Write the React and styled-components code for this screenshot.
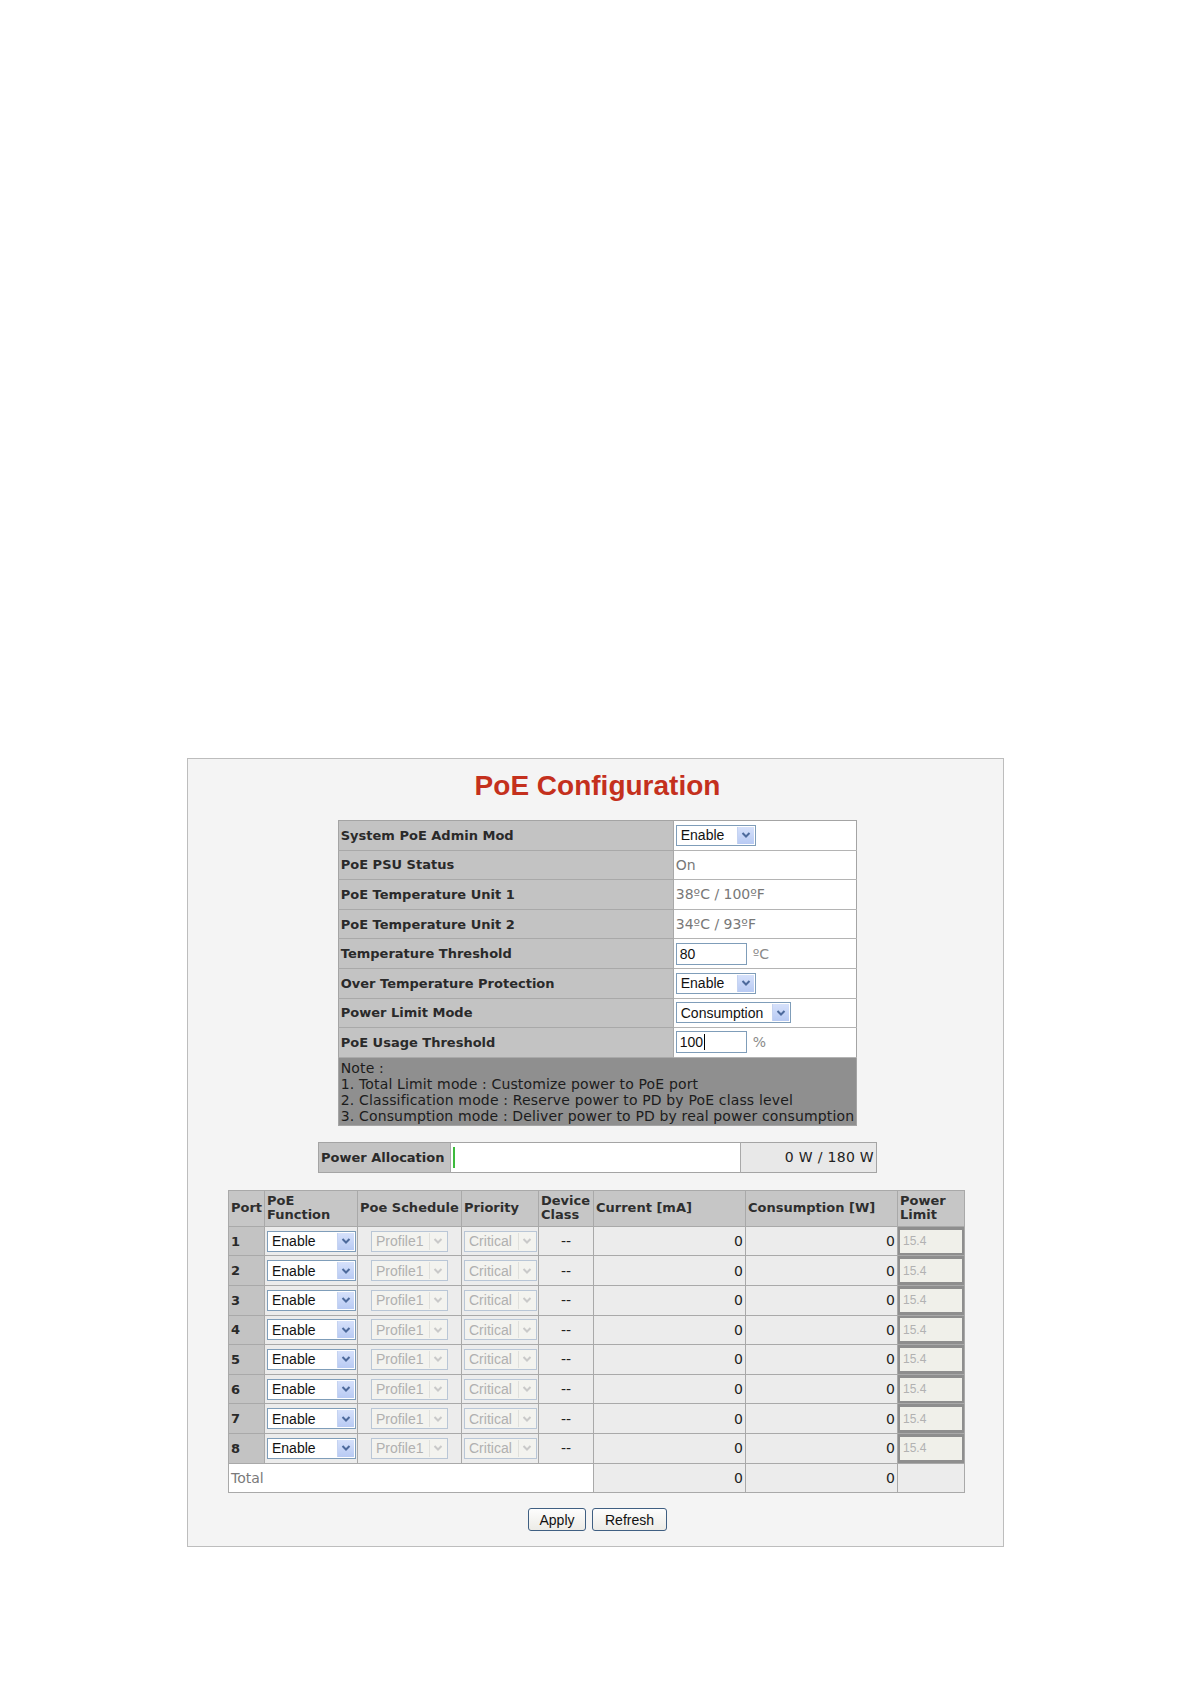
import React from 'react';
import styled, {createGlobalStyle} from 'styled-components';

const GlobalStyle = createGlobalStyle`
  html, body {
    margin: 0;
    padding: 0;
    background: #ffffff;
  }
  body {
    font-family: "DejaVu Sans", Verdana, sans-serif;
  }
`

const Page = styled.div`
  width: 1190px;
  min-height: 1684px;
  padding-top: 758px;
  box-sizing: border-box;
`

const Panel = styled.div`
  width: 817px;
  margin-left: 187px;
  box-sizing: border-box;
  border: 1px solid #bdbdbd;
  background: #f4f4f4;
  padding: 11px 0 15px 4px;
  display: flex;
  flex-direction: column;
  align-items: center;
`

const Title = styled.h1`
  margin: 0 0 18px 0;
  font: bold 28px/32px "Liberation Sans", Arial, sans-serif;
  color: #c4301d;
`

const ConfigTable = styled.table`
  width: 517px;
  border-collapse: collapse;
  border: 1px solid #a4a4a4;
  font-size: 13px;
`

const LabelCell = styled.td`
  width: 335px;
  height: 29.6px;
  padding: 0 2px;
  box-sizing: border-box;
  background: #c3c3c3;
  border-bottom: 1px solid #a9a9a9;
  border-right: 1px solid #a9a9a9;
  font-weight: bold;
  color: #2a2a2a;
`

const ValueCell = styled.td`
  height: 29.6px;
  padding: 0 2px;
  box-sizing: border-box;
  background: #ffffff;
  border-bottom: 1px solid #b4b4b4;
  font-size: 14px;
  color: #787878;
`

const NoteCell = styled.td`
  background: #8f8f8f;
  color: #1c1c1c;
  padding: 2px 2px 1px 2px;
  font-size: 14px;
  letter-spacing: 0.15px;
  line-height: 16px;
  white-space: nowrap;
`

const Inline = styled.div`
  display: flex;
  align-items: center;
  gap: 6px;
`

const SelectBox = styled.div`
  display: inline-flex;
  align-items: center;
  justify-content: space-between;
  box-sizing: border-box;
  width: ${p => p.$w}px;
  height: 21px;
  padding-left: 4px;
  border: 1px solid ${p => p.$disabled ? '#b9c6d6' : '#7f9db9'};
  background: ${p => p.$disabled ? '#f3f3ef' : '#ffffff'};
  font: 14px "Liberation Sans", Arial, sans-serif;
  letter-spacing: 0;
  color: ${p => p.$disabled ? '#b0b0b0' : '#111111'};
`

const SelectArrow = styled.span`
  width: 17px;
  height: 17px;
  margin-right: 1px;
  box-sizing: border-box;
  display: flex;
  align-items: center;
  justify-content: center;
  background: ${p => p.$disabled ? '#f3f3ef' : 'linear-gradient(#d6e1fb, #b8caf3)'};
  border-left: 1px solid ${p => p.$disabled ? '#e0e0dc' : '#c5d3f1'};
`

const TextBox = styled.div`
  width: 71px;
  height: 22px;
  box-sizing: border-box;
  border: 1px solid #7f9db9;
  background: #ffffff;
  padding-left: 3px;
  display: flex;
  align-items: center;
  font: 14px "Liberation Sans", Arial, sans-serif;
  color: #111;
`

const Caret = styled.span`
  width: 1px;
  height: 16px;
  background: #000;
  margin-left: 1px;
`

const Unit = styled.span`
  color: #8a8a8a;
`

const AllocTable = styled.table`
  width: 559px;
  margin-top: 16px;
  border-collapse: collapse;
  border: 1px solid #a4a4a4;
  font-size: 13px;
`

const AllocLabel = styled.td`
  width: 132px;
  height: 30px;
  padding: 0 2px;
  box-sizing: border-box;
  background: #c3c3c3;
  font-weight: bold;
  color: #2a2a2a;
  border-right: 1px solid #a9a9a9;
`

const AllocBar = styled.td`
  width: 287px;
  background: #ffffff;
  padding: 0 0 0 2px;
  border-right: 1px solid #a9a9a9;
`

const BarFill = styled.div`
  width: 2px;
  height: 21px;
  background: #3dbb3d;
`

const AllocValue = styled.td`
  background: #e8e8e8;
  text-align: right;
  padding-right: 2px;
  font-size: 14px;
  letter-spacing: 0.3px;
  color: #222;
`

const PortTable = styled.table`
  width: 736px;
  margin: 17px 2px 0 0;
  table-layout: fixed;
  border-collapse: collapse;
  border: 1px solid #a4a4a4;
  font-size: 13px;
`

const HeadCell = styled.th`
  width: ${p => p.$w}px;
  height: 36px;
  padding: 0 2px;
  box-sizing: border-box;
  background: #c6c6c6;
  border: 1px solid #a9a9a9;
  text-align: left;
  vertical-align: middle;
  font-weight: bold;
  line-height: 14px;
  color: #2e2e2e;
  white-space: nowrap;
  overflow: visible;
`

const PortCell = styled.td`
  height: 29.6px;
  padding: 0 2px;
  box-sizing: border-box;
  background: #c3c3c3;
  border: 1px solid #a9a9a9;
  font-weight: bold;
  color: #2a2a2a;
`

const DataCell = styled.td`
  height: 29.6px;
  padding: 0 2px;
  box-sizing: border-box;
  background: ${p => p.$white ? '#ffffff' : '#ececec'};
  border: 1px solid #a9a9a9;
  text-align: ${p => p.$align || 'left'};
  font-size: 14px;
  color: ${p => p.$muted ? '#7a7a7a' : '#222222'};
`

const LimitCell = styled.td`
  padding: 2px;
  box-sizing: border-box;
  background: #8e8e8e;
  border: 1px solid #a9a9a9;
`

const LimitInput = styled.div`
  height: 23px;
  box-sizing: border-box;
  background: #f0f0ea;
  padding-left: 3px;
  display: flex;
  align-items: center;
  font: 12px "Liberation Sans", Arial, sans-serif;
  color: #b2b2b2;
`

const ButtonRow = styled.div`
  display: flex;
  gap: 6px;
  margin-top: 15px;
`

const Button = styled.button`
  width: ${p => p.$w}px;
  height: 23px;
  padding: 0;
  border: 1px solid #3f5f82;
  border-radius: 3px;
  background: linear-gradient(#fdfdfd, #ecebe6);
  font: 14px "Liberation Sans", Arial, sans-serif;
  color: #111;
`

const Chevron = ({disabled}) => (
    <svg width="10" height="8" viewBox="0 0 10 8">
        <path d="M1.5 2 L5 5.5 L8.5 2" fill="none" stroke={disabled ? '#c9c9c9' : '#4d6a9c'} strokeWidth="2"/>
    </svg>
)

const Select = ({value, width, disabled}) => (
    <SelectBox $w={width} $disabled={disabled}>
        <span>{value}</span>
        <SelectArrow $disabled={disabled}><Chevron disabled={disabled}/></SelectArrow>
    </SelectBox>
)

const ports = [1, 2, 3, 4, 5, 6, 7, 8]

const App = () => {
    return (
        <Page>
            <GlobalStyle/>
            <Panel>
                <Title>PoE Configuration</Title>
                <ConfigTable>
                    <tbody>
                    <tr>
                        <LabelCell>System PoE Admin Mod</LabelCell>
                        <ValueCell><Select value="Enable" width={80}/></ValueCell>
                    </tr>
                    <tr>
                        <LabelCell>PoE PSU Status</LabelCell>
                        <ValueCell>On</ValueCell>
                    </tr>
                    <tr>
                        <LabelCell>PoE Temperature Unit 1</LabelCell>
                        <ValueCell>38ºC / 100ºF</ValueCell>
                    </tr>
                    <tr>
                        <LabelCell>PoE Temperature Unit 2</LabelCell>
                        <ValueCell>34ºC / 93ºF</ValueCell>
                    </tr>
                    <tr>
                        <LabelCell>Temperature Threshold</LabelCell>
                        <ValueCell>
                            <Inline><TextBox>80</TextBox><Unit>ºC</Unit></Inline>
                        </ValueCell>
                    </tr>
                    <tr>
                        <LabelCell>Over Temperature Protection</LabelCell>
                        <ValueCell><Select value="Enable" width={80}/></ValueCell>
                    </tr>
                    <tr>
                        <LabelCell>Power Limit Mode</LabelCell>
                        <ValueCell><Select value="Consumption" width={115}/></ValueCell>
                    </tr>
                    <tr>
                        <LabelCell>PoE Usage Threshold</LabelCell>
                        <ValueCell>
                            <Inline><TextBox>100<Caret/></TextBox><Unit>%</Unit></Inline>
                        </ValueCell>
                    </tr>
                    <tr>
                        <NoteCell colSpan={2}>
                            Note :<br/>
                            1. Total Limit mode : Customize power to PoE port<br/>
                            2. Classification mode : Reserve power to PD by PoE class level<br/>
                            3. Consumption mode : Deliver power to PD by real power consumption
                        </NoteCell>
                    </tr>
                    </tbody>
                </ConfigTable>

                <AllocTable>
                    <tbody>
                    <tr>
                        <AllocLabel>Power Allocation</AllocLabel>
                        <AllocBar><BarFill/></AllocBar>
                        <AllocValue>0 W / 180 W</AllocValue>
                    </tr>
                    </tbody>
                </AllocTable>

                <PortTable>
                    <thead>
                    <tr>
                        <HeadCell $w={36}>Port</HeadCell>
                        <HeadCell $w={93}>PoE<br/>Function</HeadCell>
                        <HeadCell $w={104}>Poe Schedule</HeadCell>
                        <HeadCell $w={77}>Priority</HeadCell>
                        <HeadCell $w={55}>Device<br/>Class</HeadCell>
                        <HeadCell $w={152}>Current [mA]</HeadCell>
                        <HeadCell $w={152}>Consumption [W]</HeadCell>
                        <HeadCell $w={67}>Power<br/>Limit</HeadCell>
                    </tr>
                    </thead>
                    <tbody>
                    {ports.map(port => (
                        <tr key={port}>
                            <PortCell>{port}</PortCell>
                            <DataCell><Select value="Enable" width={89}/></DataCell>
                            <DataCell $align="center"><Select value="Profile1" width={77} disabled/></DataCell>
                            <DataCell><Select value="Critical" width={73} disabled/></DataCell>
                            <DataCell $align="center">--</DataCell>
                            <DataCell $align="right">0</DataCell>
                            <DataCell $align="right">0</DataCell>
                            <LimitCell><LimitInput>15.4</LimitInput></LimitCell>
                        </tr>
                    ))}
                    <tr>
                        <DataCell colSpan={5} $white $muted>Total</DataCell>
                        <DataCell $align="right">0</DataCell>
                        <DataCell $align="right">0</DataCell>
                        <DataCell/>
                    </tr>
                    </tbody>
                </PortTable>

                <ButtonRow>
                    <Button $w={58}>Apply</Button>
                    <Button $w={75}>Refresh</Button>
                </ButtonRow>
            </Panel>
        </Page>
    );
};

export default App;
